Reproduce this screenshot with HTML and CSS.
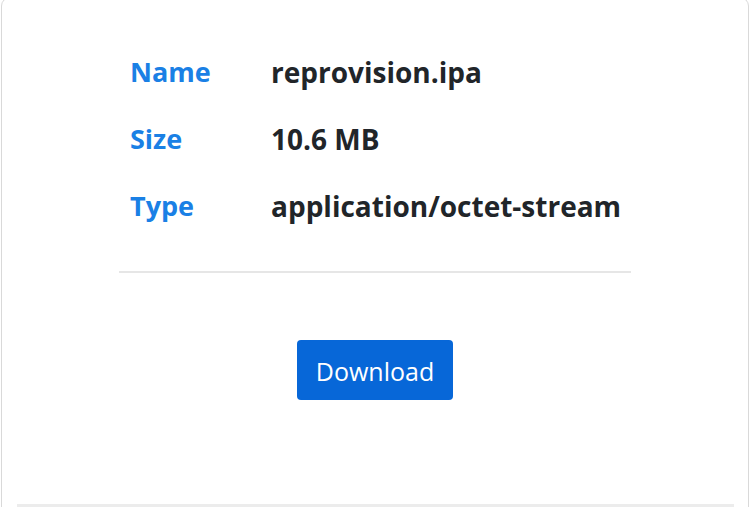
FILE: index.html
```html
<!DOCTYPE html>
<html>
<head>
<meta charset="utf-8">
<link rel="stylesheet" href="styles.css">
</head>
<body>
<div class="card">
  <div class="info">
    <div class="row"><div class="label">Name</div><div class="value">reprovision.ipa</div></div>
    <div class="row"><div class="label">Size</div><div class="value">10.6 MB</div></div>
    <div class="row"><div class="label">Type</div><div class="value">application/octet-stream</div></div>
  </div>
  <hr class="divider">
  <div class="actions">
    <button class="btn">Download</button>
  </div>
  <div class="footer"></div>
</div>
</body>
</html>
```
FILE: styles.css
```css
html, body {
  margin: 0;
  padding: 0;
  background: #ffffff;
  overflow: hidden;
}
body {
  font-family: "Open Sans", "Noto Sans", sans-serif;
  color: #212529;
}
.card {
  margin: -3px 0 0 1px;
  width: 748px;
  height: 560px;
  border: 1px solid #d9d9d9;
  border-radius: 9px;
  box-sizing: border-box;
  display: flex;
  flex-direction: column;
  align-items: center;
}
.info {
  width: 512px;
  padding-top: 56px;
  display: flex;
  flex-direction: column;
}
.row {
  display: flex;
  height: 67px;
  align-items: flex-start;
  line-height: 36px;
}
.label {
  width: 141px;
  padding-left: 11px;
  font-weight: 700;
  font-size: 27px;
  color: #1a80e5;
}
.value {
  font-weight: 700;
  font-size: 28px;
  color: #212529;
  white-space: nowrap;
}
.divider {
  width: 512px;
  margin: 16px 0 0;
  border: none;
  border-top: 2px solid #e6e6e6;
}
.actions {
  padding-top: 67px;
}
.btn {
  width: 156px;
  height: 60px;
  background: #0767d8;
  color: #ffffff;
  border: none;
  border-radius: 4px;
  font-family: "Open Sans", "Noto Sans", sans-serif;
  font-size: 25px;
  font-weight: 400;
  padding: 2px 0 0;
}
.footer {
  margin-top: 104px;
  width: 717px;
  border-top: 3px solid #ececec;
}
```
